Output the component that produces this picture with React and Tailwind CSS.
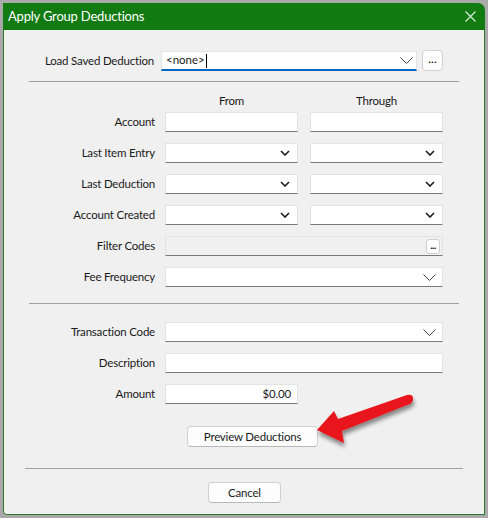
import React from 'react';

const font = { fontFamily: 'Lato, "Noto Sans", sans-serif' };

const Chevron = ({ bold }) =>
  bold ? (
    <svg width="10" height="6" viewBox="0 0 10 6" className="shrink-0">
      <path d="M1 1 L5 5 L9 1" fill="none" stroke="#1a1a1a" strokeWidth="1.6" />
    </svg>
  ) : (
    <svg width="13" height="7" viewBox="0 0 13 7" className="shrink-0">
      <path d="M0.5 0.5 L6.5 6.5 L12.5 0.5" fill="none" stroke="#444" strokeWidth="1" />
    </svg>
  );

const Field = ({ w, combo, bold, disabled, value, right, dots }) => (
  <div
    className={`${w} h-5 flex items-center border border-[#e3e3e3] border-b-[#7a7a7a] ${disabled ? 'bg-[#f0f0f0]' : 'bg-white'} ${bold ? 'pr-[7px]' : 'pr-[6px]'} pl-1 text-[11.5px] tracking-[-0.2px] text-[#1a1a1a]`}
  >
    <span className={`flex-1 ${right ? 'text-right' : ''}`}>{value}</span>
    {combo && <Chevron bold={bold} />}
    {dots && (
      <div className="w-[14px] h-[15px] -mr-[4px] rounded-[3px] border border-[#d0d0d0] bg-white flex items-center justify-center text-[10px] font-black leading-none pb-[3px] tracking-[-0.5px]">
        ...
      </div>
    )}
  </div>
);

const Row = ({ label, children }) => (
  <div className="flex items-center h-5">
    <div className="w-[151px] text-right text-[11.5px] tracking-[-0.2px] text-[#1a1a1a]">{label}</div>
    <div className="ml-[10px] flex gap-3">{children}</div>
  </div>
);

const Button = ({ children, w }) => (
  <div className={`${w} h-[21px] rounded-[4px] border border-[#d0d0d0] border-b-[#b8b8b8] bg-[#fdfdfd] flex items-center justify-center text-[11.5px] tracking-[-0.2px] text-[#1a1a1a]`}>
    {children}
  </div>
);

export default function App() {
  return (
    <div className="w-[488px] h-[518px] bg-[#a9a9a9] pt-[3px] pl-[3px]" style={font}>
      <div className="relative w-[482px] h-[512px] flex flex-col rounded-tr-[7px] rounded-bl-[4px] overflow-hidden">
        <div className="shrink-0 h-[27px] bg-[#117a11] flex items-center justify-between pl-[5px] pr-[9px]">
          <span className="text-white text-[13px] tracking-[-0.2px]">Apply Group Deductions</span>
          <svg width="11" height="11" viewBox="0 0 11 11">
            <path d="M0.5 0.5 L10.5 10.5 M10.5 0.5 L0.5 10.5" stroke="#dfeedd" strokeWidth="1.1" />
          </svg>
        </div>
        <div className="flex-1 bg-[#f0f0f0] border border-t-0 border-[#2f7a2f] rounded-bl-[4px] flex flex-col">
          {/* load saved */}
          <div className="flex items-center mt-[20px] h-[21px]">
            <div className="w-[150px] text-right text-[11.5px] tracking-[-0.2px] text-[#1a1a1a]">Load Saved Deduction</div>
            <div className="ml-[7px] w-[256px] h-[20px] bg-white border border-[#e3e3e3] border-b-2 border-b-[#0067c0] flex items-center pl-[4px] pr-[3px] text-[11.5px] text-[#1a1a1a]">
              <span className="flex-1">&lt;none&gt;<span className="inline-block w-px h-[14px] bg-black align-middle ml-[1px]" /></span>
              <Chevron />
            </div>
            <div className="ml-[5px] w-[21px] h-[21px] rounded-[4px] border border-[#d0d0d0] bg-[#fdfdfd] flex items-center justify-center text-[12px] leading-none pb-[4px]">
              ...
            </div>
          </div>

          <div className="mx-[25px] mt-[10px] h-px bg-[#a0a0a0]" />

          <div className="flex ml-[161px] mt-[11px] text-[11.5px] tracking-[-0.2px] text-[#1a1a1a] h-4 items-center">
            <div className="w-[133px] text-center">From</div>
            <div className="w-[133px] ml-3 text-center">Through</div>
          </div>

          <div className="flex flex-col gap-[11px] mt-[3px]">
            <Row label="Account">
              <Field w="w-[133px]" />
              <Field w="w-[133px]" />
            </Row>
            <Row label="Last Item Entry">
              <Field w="w-[133px]" combo bold />
              <Field w="w-[133px]" combo bold />
            </Row>
            <Row label="Last Deduction">
              <Field w="w-[133px]" combo bold />
              <Field w="w-[133px]" combo bold />
            </Row>
            <Row label="Account Created">
              <Field w="w-[133px]" combo bold />
              <Field w="w-[133px]" combo bold />
            </Row>
            <Row label="Filter Codes">
              <Field w="w-[278px]" disabled dots />
            </Row>
            <Row label="Fee Frequency">
              <Field w="w-[278px]" combo />
            </Row>
          </div>

          <div className="mx-[25px] mt-[16px] h-px bg-[#a0a0a0]" />

          <div className="flex flex-col gap-[11px] mt-[18px]">
            <Row label="Transaction Code">
              <Field w="w-[278px]" combo />
            </Row>
            <Row label="Description">
              <Field w="w-[278px]" />
            </Row>
            <Row label="Amount">
              <Field w="w-[133px]" value="$0.00" right />
            </Row>
          </div>

          <div className="ml-[183px] mt-[22px]">
            <Button w="w-[131px]">Preview Deductions</Button>
          </div>

          <div className="mx-[21px] mt-[21px] h-px bg-[#a0a0a0]" />

          <div className="ml-[204px] mt-[13px]">
            <Button w="w-[73px]">Cancel</Button>
          </div>
        </div>

        <svg className="absolute left-0 top-0 pointer-events-none" width="482" height="512" viewBox="3 3 482 512">
          <defs>
            <filter id="sh" x="-20%" y="-20%" width="140%" height="160%">
              <feDropShadow dx="1" dy="4" stdDeviation="2" floodColor="#000" floodOpacity="0.45" />
            </filter>
          </defs>
          <path
            d="M317 430 L334 411 L338 419 L407 395 Q414 394 413 400 Q412 404 407 405 L342 431 L344 443 Z"
            fill="#e8141b"
            filter="url(#sh)"
          />
        </svg>
      </div>
    </div>
  );
}
